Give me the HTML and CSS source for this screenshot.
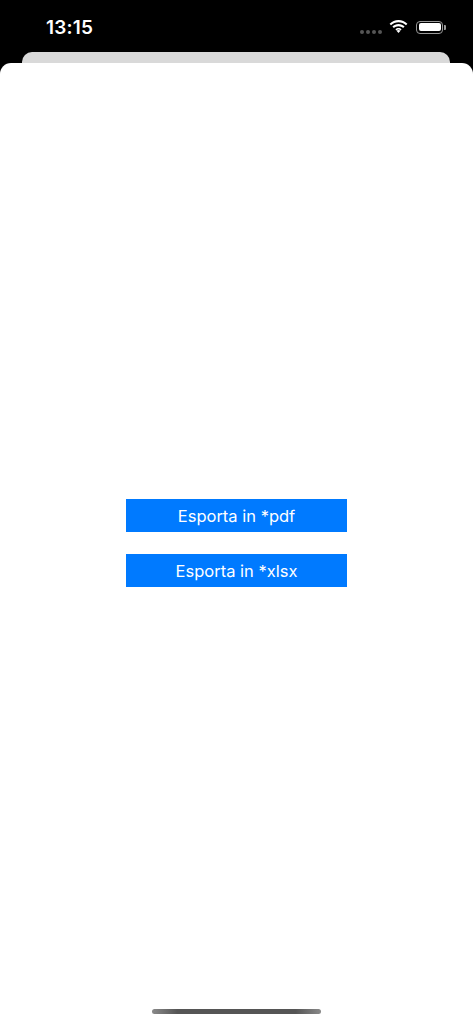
FILE: index.html
```html
<!DOCTYPE html>
<html>
<head>
<meta charset="utf-8">
<link rel="stylesheet" href="styles.css">
</head>
<body>
<div class="screen">
  <div class="status">
    <span class="time">13:15</span>
    <div class="icons">
      <span class="dots"><i></i><i></i><i></i><i></i></span>
      <svg class="wifi" width="19" height="14" viewBox="0 0 19 14">
        <path d="M9.5 2.2c2.9 0 5.5 1.1 7.5 3l1.4-1.5C16 1.4 12.9 0 9.5 0S3 1.4.6 3.7L2 5.2c2-1.9 4.6-3 7.5-3z" fill="#fff"/>
        <path d="M9.5 6.2c1.8 0 3.4.7 4.6 1.8l1.5-1.5C14 5 11.900 4 9.5 4S5 5 3.4 6.5L4.9 8c1.2-1.1 2.8-1.8 4.6-1.8z" fill="#fff"/>
        <path d="M9.5 10c.8 0 1.5.3 2 .8L9.5 13 7.5 10.8c.5-.5 1.2-.8 2-.8z" fill="#fff"/>
        <path d="M9.5 8.1c1.2 0 2.3.5 3.1 1.2L11.5 10.4c-.5-.5-1.2-.8-2-.8s-1.5.3-2 .8L6.4 9.3c.8-.7 1.9-1.2 3.1-1.2z" fill="#fff"/>
      </svg>
      <span class="battery"><span class="level"></span></span>
      <span class="cap"></span>
    </div>
  </div>
  <div class="back-card"></div>
  <div class="sheet">
    <div class="actions">
      <button class="btn">Esporta in *pdf</button>
      <button class="btn">Esporta in *xlsx</button>
    </div>
    <div class="home"></div>
  </div>
</div>
</body>
</html>
```
FILE: styles.css
```css
html, body {
  margin: 0;
  padding: 0;
  background: #000;
}
.screen {
  width: 473px;
  height: 1024px;
  background: #000;
  display: flex;
  flex-direction: column;
  overflow: hidden;
  font-family: Inter, "Liberation Sans", sans-serif;
}
.status {
  height: 52px;
  display: flex;
  align-items: center;
  justify-content: space-between;
  padding: 0 27px 0 46px;
  box-sizing: border-box;
}
.time {
  color: #fff;
  font-size: 19px;
  font-weight: 600;
  letter-spacing: 0.2px;
  margin-top: 2px;
}
.icons {
  display: flex;
  align-items: center;
  margin-top: 2px;
}
.dots {
  display: flex;
  gap: 2px;
  margin-right: 7px;
  margin-top: 9px;
}
.dots i {
  width: 4px;
  height: 4px;
  border-radius: 50%;
  background: #555;
}
.wifi {
  margin-right: 8px;
}
.battery {
  width: 27px;
  height: 13px;
  border: 1.5px solid #999;
  border-radius: 4px;
  box-sizing: border-box;
  padding: 1.5px;
  display: flex;
}
.level {
  flex: 1;
  background: #fff;
  border-radius: 2px;
}
.cap {
  width: 2px;
  height: 5px;
  background: #999;
  border-radius: 0 1px 1px 0;
  margin-left: 1px;
}
.back-card {
  height: 11px;
  margin: 0 23px 0 22px;
  background: #d9d9d9;
  border-radius: 10px 10px 0 0;
  flex: none;
}
.sheet {
  flex: 1;
  background: #fff;
  border-radius: 11px 11px 0 0;
  display: flex;
  flex-direction: column;
  align-items: center;
  position: relative;
}
.actions {
  margin-top: 436px;
  display: flex;
  flex-direction: column;
  gap: 22px;
}
.btn {
  width: 221px;
  height: 33px;
  border: none;
  background: #007aff;
  color: #fff;
  font-family: Inter, "Liberation Sans", sans-serif;
  font-size: 16.5px;
  padding: 0;
  margin: 0;
}
.home {
  position: absolute;
  bottom: 10px;
  left: 152px;
  width: 169px;
  height: 5px;
  border-radius: 3px;
  background: linear-gradient(90deg, #8a8a8a, #555 15%, #555 85%, #8a8a8a);
}
```
